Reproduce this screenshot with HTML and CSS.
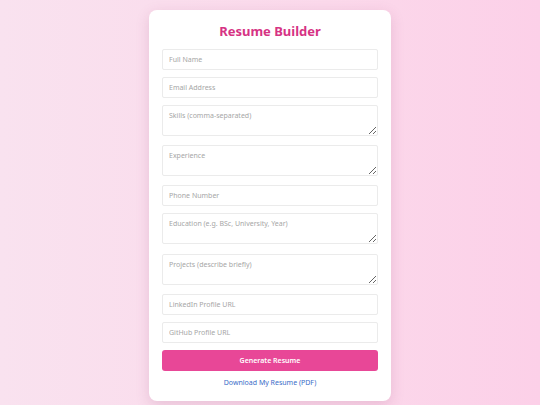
FILE: index.html
```html
<!DOCTYPE html>
<html>
<head>
<meta charset="utf-8">
<link rel="stylesheet" href="styles.css">
</head>
<body>
<div class="card">
  <h1 class="title">Resume Builder</h1>
  <form class="form">
    <input class="field" type="text" placeholder="Full Name">
    <input class="field" type="text" placeholder="Email Address">
    <textarea class="field area" placeholder="Skills (comma-separated)"></textarea>
    <textarea class="field area" placeholder="Experience"></textarea>
    <input class="field" type="text" placeholder="Phone Number">
    <textarea class="field area wide" placeholder="Education (e.g. BSc, University, Year)"></textarea>
    <textarea class="field area" placeholder="Projects (describe briefly)"></textarea>
    <input class="field" type="text" placeholder="LinkedIn Profile URL">
    <input class="field" type="text" placeholder="GitHub Profile URL">
    <button class="btn" type="button">Generate Resume</button>
  </form>
  <a class="link" href="#">Download My Resume (PDF)</a>
</div>
</body>
</html>
```
FILE: styles.css
```css
html, body {
  margin: 0;
  padding: 0;
}
body {
  width: 540px;
  height: 405px;
  background: linear-gradient(90deg, #f9e2ef 0%, #fbd9eb 60%, #fcd0e8 100%);
  font-family: "Noto Sans", "Open Sans", sans-serif;
  display: flex;
  justify-content: center;
  align-items: flex-start;
  padding-top: 10px;
  box-sizing: border-box;
}
.card {
  width: 242px;
  background: #fff;
  border-radius: 8px;
  box-shadow: 0 4px 14px rgba(150, 60, 110, 0.18);
  padding: 9px 13px 12px;
  box-sizing: border-box;
  display: flex;
  flex-direction: column;
}
.title {
  margin: 0 0 6px;
  font-size: 13px;
  line-height: 24px;
  font-weight: 700;
  color: #d63384;
  text-align: center;
}
.form {
  display: flex;
  flex-direction: column;
  gap: 7px;
  margin: 0;
}
.field {
  display: block;
  width: 100%;
  box-sizing: border-box;
  height: 21px;
  margin: 0;
  padding: 0 6px;
  border: 1px solid #ebebeb;
  border-radius: 2px;
  font-family: inherit;
  font-size: 7px;
  color: #333;
  background: #fff;
  outline: none;
}
.field::placeholder {
  color: #a6a6a6;
}
.area {
  height: 31px;
  padding: 5px 6px;
  margin-bottom: 2px;
  resize: vertical;
}
.area.wide {
  margin-bottom: 3px;
}
.btn {
  height: 21px;
  border: none;
  border-radius: 3px;
  background: #e84797;
  color: #fff;
  font-family: inherit;
  font-size: 7px;
  font-weight: 600;
  padding: 0;
}
.link {
  margin-top: 6px;
  text-align: center;
  font-size: 7px;
  line-height: 12px;
  color: #3a6cc8;
  text-decoration: none;
}
```
